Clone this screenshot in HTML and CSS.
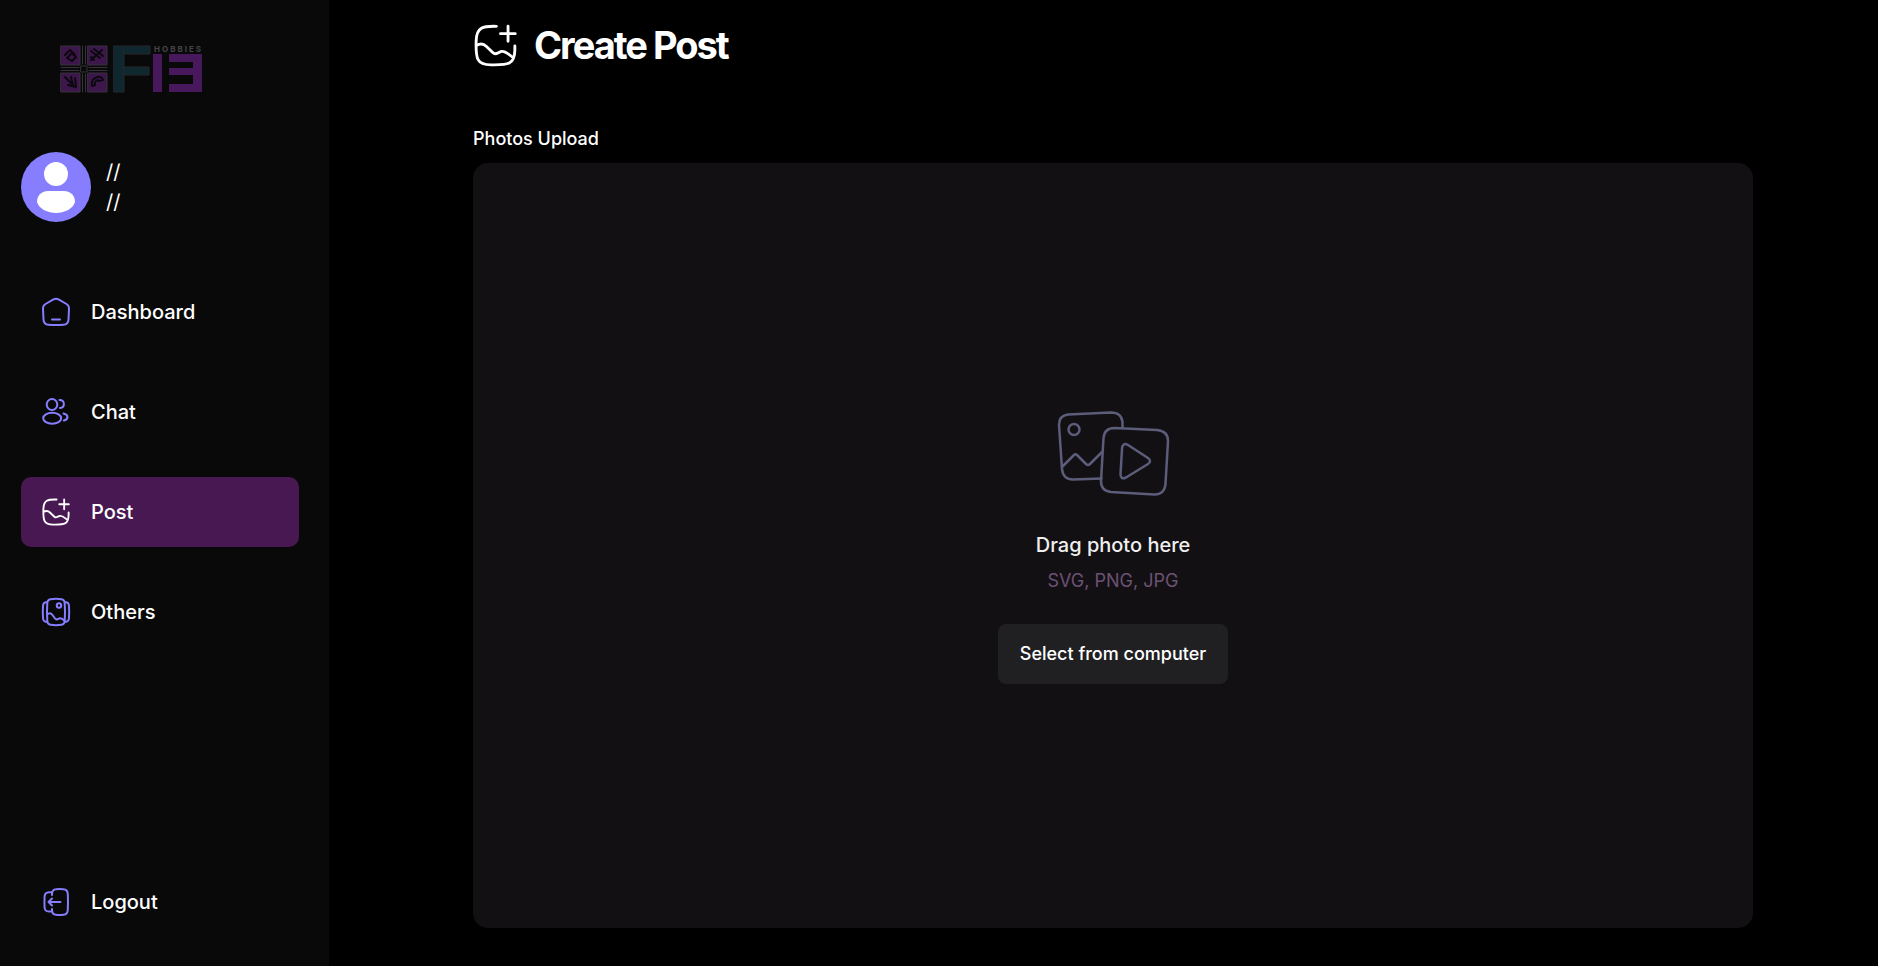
FILE: index.html
```html
<!DOCTYPE html>
<html lang="en">
<head>
<meta charset="utf-8">
<meta name="viewport" content="width=device-width, initial-scale=1">
<title>Create Post</title>
<link rel="stylesheet" href="styles.css">
</head>
<body>
<svg class="sprite" aria-hidden="true">
  <symbol id="add-post" viewBox="0 0 24 24">
    <path d="M12.500 1.300C5 1.100 1.400 1.700 1.200 9.500C.9 19.500 1.600 22.700 9.500 22.800C19 23 22.700 22.700 22.800 14.500V12.300M1.300 12C3.600 10.700 5.300 10.900 6.800 12.400L10.600 16.100C12.200 17.600 13.500 15.700 15.300 15.300C17.800 14.900 19.500 17.200 22 18.900M19 1.200V9.600M14.800 5.400H23"/>
  </symbol>
</svg>
<div class="app">
  <aside class="sidebar">
    <a class="logo" href="#" aria-label="F13 Hobbies">
      <svg viewBox="0 0 144 48" width="144" height="48">
        <g class="logo-tile">
          <rect x="1" y="1" width="19" height="19"/><rect x="28" y="1" width="19" height="19"/>
          <rect x="1" y="28" width="19" height="19"/><rect x="28" y="28" width="19" height="19"/>
        </g>
        <path class="logo-cross" d="M22.500 1V19M25.500 1V19M22.500 29V47M25.500 29V47M1 22.500H19M1 25.500H19M29 22.500H47M29 25.500H47M21 21H27V27H21Z"/>
        <path class="logo-glyph" d="M5 10L10 5L15 10M7 13L12 8L16 12L12 16ZM31 15L42 5M31 6L40 13M34 4L43 11M31 12L34 15M5 32L13 40M8 40L16 42L15 33M11 32L13 40M32 41C30 32 42 29 43 35L39 36C37 34 34 37 35 40Z"/>
        <g class="logo-teal"><rect x="54" y="1" width="10" height="46"/><rect x="64" y="1" width="26" height="8"/><rect x="64" y="22" width="25" height="8"/></g>
        <g class="logo-purple"><rect x="93" y="9" width="9" height="38"/><rect x="109" y="9" width="33" height="8"/><rect x="109" y="23" width="24" height="7"/><rect x="109" y="39" width="33" height="8"/><rect x="133" y="9" width="9" height="38"/></g>
        <text class="logo-text" x="94" y="7">HOBBIES</text>
      </svg>
    </a>
    <a class="profile" href="#" aria-label="Profile">
      <svg viewBox="0 0 70 70" width="70" height="70" aria-hidden="true">
        <circle cx="35" cy="35" r="35" fill="#877eff"/>
        <circle cx="35" cy="22" r="12" fill="#fff"/>
        <path fill="#fff" d="M27 39H43C50 39 54 44 54 50C52 57 43 61 35 61S18 57 16 50C16 44 20 39 27 39Z"/>
      </svg>
      <span class="names"><span>//</span><span>//</span></span>
    </a>
    <nav class="nav">
      <a class="item" href="#">
        <svg class="icon" viewBox="0 0 30 30" aria-hidden="true"><path d="M12.500 2.400Q15 1 17.500 2.400L25.500 7Q28 8.500 28 11.500L27.500 22.500Q27.300 27.500 22.500 27.700Q15 28.200 7.500 27.700Q2.700 27.500 2.500 22.500L2 11.500Q2 8.500 4.500 7ZM11 22.500H19"/></svg>
        <span>Dashboard</span>
      </a>
      <a class="item" href="#">
        <svg class="icon" viewBox="0 0 30 30" aria-hidden="true"><ellipse cx="11" cy="7.500" rx="5.300" ry="5.500"/><ellipse cx="11.200" cy="21.300" rx="9" ry="5.500"/><path d="M18.500 3C24 2.800 24.500 10.500 19 11M22.500 16.500C28 18 27.500 22.300 22.800 23.500"/></svg>
        <span>Chat</span>
      </a>
      <a class="item active" href="#" aria-current="page">
        <svg class="icon post" aria-hidden="true"><use href="#add-post"/></svg>
        <span>Post</span>
      </a>
      <a class="item" href="#">
        <svg class="icon" viewBox="0 0 30 30" aria-hidden="true"><path d="M9.500 2.200Q15 1.500 20.500 2.200Q23.500 2.600 23.700 6Q24.300 15 23.700 24Q23.500 27.500 20.500 27.800Q15 28.500 9.500 27.800Q6.500 27.500 6.300 24Q5.700 15 6.300 6Q6.500 2.600 9.500 2.200ZM6 5Q2.200 5.200 2 9Q1.600 15 2 21Q2.200 24.800 6 25M24 5Q27.800 5.200 28 9Q28.400 15 28 21Q27.800 24.800 24 25M6.300 17.500C8.500 15.500 10 16 11.500 18L14 21.500C16 24 17.500 20.800 19.500 21.200C21.500 21.500 22.500 23 23.500 24"/><circle cx="18" cy="8.500" r="2.200"/></svg>
        <span>Others</span>
      </a>
    </nav>
    <button class="item logout" type="button">
      <svg class="icon" viewBox="0 0 30 30" aria-hidden="true"><path d="M11 8V7Q11 2.500 15 2.200Q18.500 1.800 22.500 2.200Q26.500 2.500 26.800 7Q27.200 15 26.800 23Q26.500 27.500 22.500 27.800Q18.500 28.200 15 27.800Q11 27.500 11 23V22M10.500 5.200H8Q4 5.400 3.600 9Q3.300 15 3.600 21Q4 24.400 8 24.600H10.500M19.500 15H8M11 11.500Q9 13.500 7.500 15Q9 16.500 11 18.500"/></svg>
      <span>Logout</span>
    </button>
  </aside>
  <main class="main">
    <div class="content">
      <header class="head">
        <svg class="head-icon" aria-hidden="true"><use href="#add-post"/></svg>
        <h1>Create Post</h1>
      </header>
      <h2 class="label" id="upload-label">Photos Upload</h2>
      <section class="drop" aria-labelledby="upload-label">
        <svg class="art" viewBox="0 0 120 96" width="120" height="96" aria-hidden="true">
          <path d="M48.500 71.500L20 72.500Q10 72.500 9 62L6 18Q6 8.500 15 7.500L58 5.500Q68.500 5.500 69.500 15V20M9 60L21 48Q22.500 46.500 24 48L33 57Q35 59 37 57L49 45"/>
          <circle cx="21" cy="22.500" r="5.500"/>
          <path d="M61.500 21L104 23Q115 24 115 34L112.500 77Q111.500 87.500 101.500 87.500L58 85Q48 84 48 74L50.500 31Q51.500 21 61.500 21Z"/>
          <path d="M69 42Q69.500 35 75 38L95 51Q99 54 95 57L73 70.500Q67.500 73 67.500 67Z"/>
        </svg>
        <h3>Drag photo here</h3>
        <p>SVG, PNG, JPG</p>
        <button class="select" type="button">Select from computer</button>
      </section>
    </div>
  </main>
</div>
</body>
</html>
```
FILE: styles.css
```css
* { box-sizing: border-box; margin: 0; }
body { background: #000; color: #fff; font: 500 20px/28px Inter, "Liberation Sans", sans-serif; }
a { color: inherit; text-decoration: none; }
button { font: inherit; color: inherit; border: 0; background: none; cursor: pointer; }
svg { flex: none; fill: none; stroke-linecap: round; stroke-linejoin: round; }
.sprite { position: absolute; width: 0; height: 0; }
.app { display: flex; min-height: 100vh; }
.sidebar { display: flex; flex-direction: column; flex: none; width: 329px; padding: 45px 30px 29px 21px; background: #09090a; }
.logo { display: block; height: 48px; padding-left: 39px; }
.logo-tile { fill: #3d174c; stroke: #37323a; }
.logo-cross { stroke: #37323a; }
.logo-glyph { stroke: #0b080d; stroke-width: 2; }
.logo-teal { fill: #0f272f; stroke: #24282b; }
.logo-purple { fill: #47185b; }
.logo-text { fill: #444446; font: 700 8px Inter, sans-serif; letter-spacing: 2px; }
.profile { display: flex; align-items: center; gap: 15px; margin-top: 59px; }
.names { display: flex; flex-direction: column; gap: 2px; font-weight: 400; }
.nav { display: flex; flex-direction: column; gap: 30px; margin-top: 55px; }
.item { display: flex; align-items: center; gap: 20px; width: 100%; height: 70px; padding: 0 20px; border-radius: 10px; text-align: left; }
.icon { width: 30px; height: 30px; stroke: #877eff; stroke-width: 2; }
.icon.post { stroke: #fff; stroke-width: 1.600; padding: 1px; }
.active { background: #481853; }
.logout { margin-top: auto; }
.main { flex: 1; display: flex; justify-content: center; min-width: 0; padding: 19px 0 38px 19px; }
.content { display: flex; flex-direction: column; width: 100%; max-width: 1280px; }
.head { display: flex; align-items: center; gap: 16px; }
.head-icon { width: 45px; height: 45px; padding: 1px; stroke: #fff; stroke-width: 1.600; }
h1 { font-size: 38px; line-height: 52px; font-weight: 700; letter-spacing: -2px; }
.label { margin-top: 55px; font-size: 18px; line-height: 25px; font-weight: 500; }
.drop { flex: 1; display: flex; flex-direction: column; align-items: center; justify-content: center; margin-top: 12px; background: #121013; border-radius: 15px; }
.art { stroke: #5c5c7b; stroke-width: 2.500; }
h3 { margin: 30px 0 10px; font-size: 20px; line-height: 25px; font-weight: 500; color: #efefef; }
.drop p { font-size: 18px; line-height: 26px; font-weight: 400; color: #6c5275; }
.select { height: 60px; margin-top: 30px; padding: 0 22px; border-radius: 8px; background: #201f22; font-size: 18px; }
```
